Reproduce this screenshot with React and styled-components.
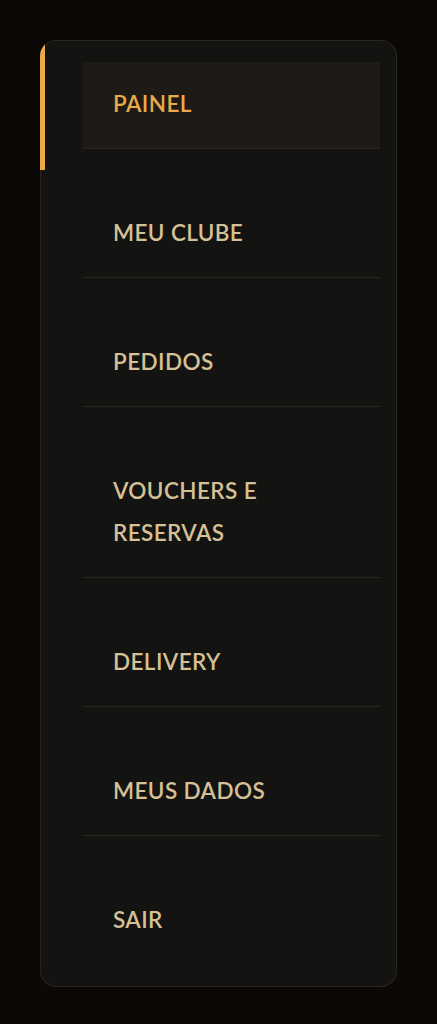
import React from 'react';
import styled, { createGlobalStyle } from 'styled-components';

const items = [
	{ label: 'PAINEL', active: true },
	{ label: 'MEU CLUBE' },
	{ label: 'PEDIDOS' },
	{ label: 'VOUCHERS E RESERVAS' },
	{ label: 'DELIVERY' },
	{ label: 'MEUS DADOS' },
	{ label: 'SAIR' },
];

const App = () => {
	return (
		<Page>
			<GlobalStyle />
			<Sidebar>
				<Accent />
				<Menu>
					{items.map((item) => (
						<MenuItem key={item.label} $active={item.active}>
							<MenuLink $active={item.active}>{item.label}</MenuLink>
						</MenuItem>
					))}
				</Menu>
			</Sidebar>
		</Page>
	);
}

const GlobalStyle = createGlobalStyle`
	html, body {
		margin: 0;
		padding: 0;
		background: #0b0806;
	}
	* {
		box-sizing: border-box;
	}
`

const Page = styled.div`
	min-height: 1024px;
	padding: 40px;
	background: #0b0806;
	font-family: Lato, "Open Sans", sans-serif;
`

const Sidebar = styled.nav`
	position: relative;
	overflow: hidden;
	background: #131312;
	border-radius: 16px;
	box-shadow: inset 0 0 0 1px #2c2418;
	padding: 22px 17px 23px 42px;
`

const Accent = styled.span`
	position: absolute;
	left: 0;
	top: 0;
	width: 5px;
	height: 130px;
	background: #e9a94a;
`

const Menu = styled.ul`
	list-style: none;
	margin: 0;
	padding: 0;
	display: flex;
	flex-direction: column;
	gap: 42px;
`

const MenuItem = styled.li`
	padding: 22px 60px 22px 31px;
	border-bottom: 1px solid #2d2519;
	background: ${(p) => (p.$active ? '#1e1a15' : 'transparent')};

	&:last-child {
		border-bottom: none;
	}
`

const MenuLink = styled.a`
	display: block;
	font-size: 22.5px;
	font-weight: 600;
	line-height: 42px;
	letter-spacing: 0.4px;
	color: ${(p) => (p.$active ? '#eaaa4b' : '#d6c096')};
	cursor: pointer;
	transform: translateY(-1px);
`

export default App;
